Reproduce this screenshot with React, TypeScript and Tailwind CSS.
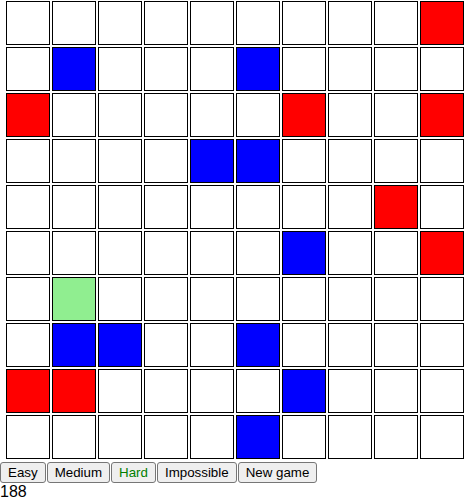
import React from "react";

const R = "r", B = "b", G = "g", _ = "";
const board: string[][] = [
  [_, _, _, _, _, _, _, _, _, R],
  [_, B, _, _, _, B, _, _, _, _],
  [R, _, _, _, _, _, R, _, _, R],
  [_, _, _, _, B, B, _, _, _, _],
  [_, _, _, _, _, _, _, _, R, _],
  [_, _, _, _, _, _, B, _, _, R],
  [_, G, _, _, _, _, _, _, _, _],
  [_, B, B, _, _, B, _, _, _, _],
  [R, R, _, _, _, _, B, _, _, _],
  [_, _, _, _, _, B, _, _, _, _],
];

function cellClass(v: string) {
  if (v === "r") return "bg-[#ff0000]";
  if (v === "b") return "bg-[#0000ff]";
  if (v === "g") return "bg-[#90ee90]";
  return "bg-white";
}

const btn =
  "h-[21px] px-[7px] py-0 border border-[#767676] rounded-[3px] bg-[#efefef] text-[13.333px] leading-[15px] text-black whitespace-nowrap";

export default function App() {
  return (
    <div className="bg-white text-black font-['Liberation_Sans',Arial,sans-serif] w-[467px] h-[504px] overflow-hidden">
      <div className="pl-[6px] pt-[1px] grid grid-cols-[repeat(10,44px)] gap-[2px]">
        {board.flat().map((v, i) => (
          <div key={i} className={`w-[44px] h-[44px] border border-black ${cellClass(v)}`} />
        ))}
      </div>
      <div className="flex mt-[3px] gap-[1px]">
        <button className={btn}>Easy</button>
        <button className={btn}>Medium</button>
        <button className={`${btn} !text-[#008000]`}>Hard</button>
        <button className={btn}>Impossible</button>
        <button className={btn}>New game</button>
      </div>
      <div className="text-[16px] leading-[18px]">188</div>
    </div>
  );
}
